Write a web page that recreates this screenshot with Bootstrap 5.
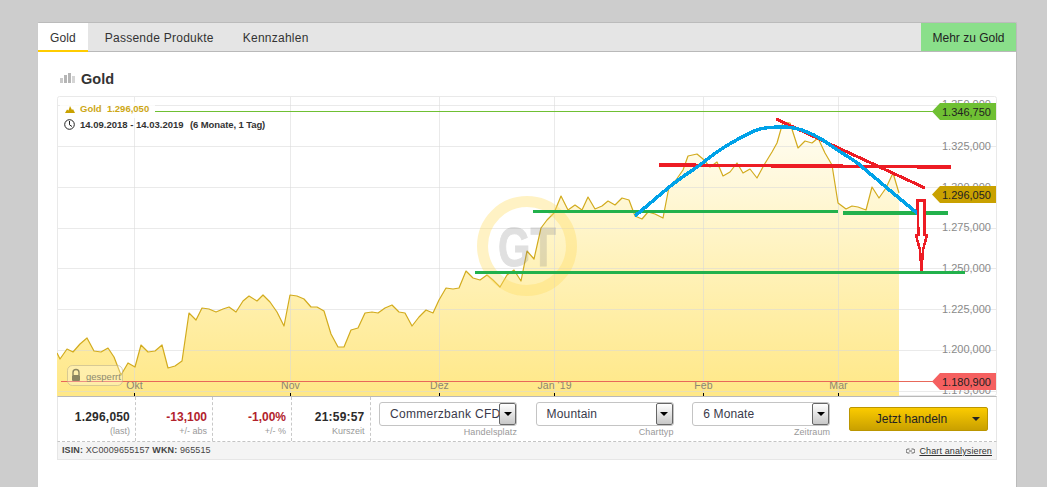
<!DOCTYPE html>
<html lang="de">
<head>
<meta charset="utf-8">
<title>Gold</title>
<link href="https://cdn.jsdelivr.net/npm/bootstrap@5.3.0/dist/css/bootstrap.min.css" rel="stylesheet">
<style>
html,body{height:100%;overflow:hidden}
body{background:#cdcdcd;font-family:"Liberation Sans",Arial,sans-serif;color:#333;font-size:12px}
.shell{margin:22px 30px 0 37px;height:465px;background:#fff;border:1px solid #bbb;border-bottom:0;border-left-color:#ccc;border-radius:2px 2px 0 0}
.tabbar{height:29px;background:#e5e5e5;border-bottom:1px solid #b9b9b9}
.tabbar .nav-link{color:#333;font-size:12px;letter-spacing:.25px;padding:0 14.5px;line-height:30px;height:28px;border-radius:0}
.tabbar .nav-link.active{background:#fff;color:#333;height:29px;border-bottom:2px solid #fc0;padding:0 12px;letter-spacing:.1px}
.tabbar .nav-item:nth-child(2){margin-left:2.5px}
.more{background:#8adf8a;color:#222;font-size:12px;line-height:30px;width:95px;text-align:center;text-decoration:none}
.headline{padding:19px 0 0 22px;height:44px;gap:6px}
.headline h1{font-size:14.5px;font-weight:700;margin:0;color:#333;line-height:17px}
.chartwrap{margin:0 19px}
.plot{display:block;width:940px;height:300px}
.plot text{font-family:"Liberation Sans",Arial,sans-serif}
.ax{font-size:11px;fill:#8a8a8a}
.mo{font-size:10.5px;fill:#8c8670;letter-spacing:.1px;text-anchor:middle}
.tagt{font-size:11px;fill:#222}
.panel{height:46px;border:1px solid #e6e6e6;border-width:0 1px;border-top:1px solid #b9b9b9;border-bottom:1px dashed #c4c4c4}
.stat{height:100%;border-right:1px dashed #c8c8c8;padding:13px 5px 0 0;text-align:right}
.stat b{display:block;font-size:12px;line-height:14px;letter-spacing:.2px;color:#2b2b2b}
.stat span{display:block;font-size:9px;line-height:12px;margin-top:1px;color:#999}
.stat b.neg{color:#b2222c;letter-spacing:0}
.w1{width:78px}.w2{width:77px}.w3{width:79px}.w4{width:78.5px}
.pick{width:138px}
.pickbox{height:24px;border:1px solid #c4c4c4;border-radius:3px;background:#fff;overflow:hidden}
.pickbox span{font-size:12px;letter-spacing:.15px;padding:0 3px 0 10px;white-space:nowrap;overflow:hidden;flex:1;line-height:22px;color:#3a3a4a}
.pickbox span.wide{letter-spacing:.3px}
.pickbtn{width:17px;height:100%;border:1px solid #666;border-radius:2px;background:linear-gradient(#fff,#c8c8c8)}
.pickbtn i{border:4px solid transparent;border-top:4px solid #000;border-bottom:0;display:block}
.picklab{font-size:9px;line-height:12px;color:#999;text-align:right;margin-top:0;letter-spacing:.1px}
.selects{gap:18.6px;padding-left:8.5px;padding-top:5px;height:100%}
.trade{width:139px;height:24px;margin:5px 0 0 0;background:linear-gradient(#fbcb00,#c9a000);border:1px solid #bb9600;border-radius:2px;color:#222;font-size:12px;padding:0 7px 0 26px;line-height:22px}
.trade i{border:4px solid transparent;border-top:4px solid #222;border-bottom:0;display:block}
.foot{height:18px;background:#f4f4f4;border:1px solid #e6e6e6;border-top:0;font-size:9px;padding:0 4px;line-height:16px;color:#444;letter-spacing:.12px}
.foot a{color:#333;text-decoration:underline}
</style>
</head>
<body>
<div class="shell">
  <div class="tabbar d-flex justify-content-between">
    <ul class="nav">
      <li class="nav-item"><a class="nav-link active" href="#">Gold</a></li>
      <li class="nav-item"><a class="nav-link" href="#">Passende Produkte</a></li>
      <li class="nav-item"><a class="nav-link" href="#">Kennzahlen</a></li>
    </ul>
    <a class="more" href="#">Mehr zu Gold</a>
  </div>
  <div class="headline d-flex align-items-start">
    <svg width="15" height="17" viewBox="0 0 15 17"><rect x="0" y="7" width="3" height="5" fill="#c9c9c9"/><rect x="4" y="4" width="3" height="8" fill="#b5b5b5"/><rect x="8" y="2" width="3" height="10" fill="#b5b5b5"/><rect x="12" y="5" width="3" height="7" fill="#d5d5d5"/></svg>
    <h1>Gold</h1>
  </div>
  <div class="chartwrap">
    <svg class="plot" viewBox="57 96 940 300" xmlns="http://www.w3.org/2000/svg">
      <defs>
        <linearGradient id="fillg" gradientUnits="userSpaceOnUse" x1="0" y1="125" x2="0" y2="392">
          <stop offset="0" stop-color="#fffdf2"/><stop offset="1" stop-color="#ffe888"/>
        </linearGradient>
      </defs>
      <rect x="57.500" y="96.500" width="939" height="299" rx="2" fill="#fff" stroke="#e9e9e9"/>
      <path id="area" fill="url(#fillg)" d="M57 396V353L60 359 67 349 73 352 80 344 87 338 94 351 101 352 108 348 114 357 121 375 128 363 135 367 141 345 148 352 155 351 162 345 168 368 175 366 182 361 189 313 196 320 202 308 209 309 216 312 223 309 229 307 236 312 243 301 249 296 257 301 263 295 270 302 277 312 284 326 290 295 297 296 304 299 311 307 317 307 324 311 331 334 338 347 344 347 351 330 358 328 365 313 372 312 378 313 385 308 392 305 399 312 405 313 412 326 419 317 426 310 433 313 439 300 446 288 453 289 459 288 466 271 473 278 480 280 487 275 493 280 500 287 507 275 514 270 521 281 527 251 534 259 541 228 547 220 554 213 561 196 568 210 575 205 582 210 588 197 595 209 602 206 608 201 615 205 622 198 629 200 635 216 642 219 648 212 655 214 663 218 669 187 676 180 683 170 688 156 697 154 703 159 710 167 717 162 723 176 730 172 737 163 743 173 750 169 757 178 764 165 772 152 777 143 783 122 790 123 798 148 805 141 812 143 818 138 825 153 832 165 838 203 846 209 852 206 858 207 866 210 872 187 879 198 886 188 893 173 899 193V396Z"/>
      <g stroke="#d8d8d8" stroke-opacity=".55" stroke-width="1">
        <path d="M58 105.500H996M58 146.500H996M58 187.500H996M58 228.500H996M58 268.500H996M58 309.500H996M58 350.500H996M58 391.500H996"/>
        <path d="M134.500 97V395M290.500 97V395M439.500 97V395M554.500 97V395M703.500 97V395M838.500 97V395"/>
      </g>
      <path fill="none" stroke="#d2ab1e" stroke-width="1.200" stroke-linejoin="round" d="M57 353L60 359 67 349 73 352 80 344 87 338 94 351 101 352 108 348 114 357 121 375 128 363 135 367 141 345 148 352 155 351 162 345 168 368 175 366 182 361 189 313 196 320 202 308 209 309 216 312 223 309 229 307 236 312 243 301 249 296 257 301 263 295 270 302 277 312 284 326 290 295 297 296 304 299 311 307 317 307 324 311 331 334 338 347 344 347 351 330 358 328 365 313 372 312 378 313 385 308 392 305 399 312 405 313 412 326 419 317 426 310 433 313 439 300 446 288 453 289 459 288 466 271 473 278 480 280 487 275 493 280 500 287 507 275 514 270 521 281 527 251 534 259 541 228 547 220 554 213 561 196 568 210 575 205 582 210 588 197 595 209 602 206 608 201 615 205 622 198 629 200 635 216 642 219 648 212 655 214 663 218 669 187 676 180 683 170 688 156 697 154 703 159 710 167 717 162 723 176 730 172 737 163 743 173 750 169 757 178 764 165 772 152 777 143 783 122 790 123 798 148 805 141 812 143 818 138 825 153 832 165 838 203 846 209 852 206 858 207 866 210 872 187 879 198 886 188 893 173 899 193"/>
      <circle cx="527" cy="246" r="44.500" fill="none" stroke="#ffdc64" stroke-opacity=".38" stroke-width="11"/>
      <text x="498" y="266" font-size="56" font-weight="700" fill="#808080" stroke="#808080" opacity=".24" textLength="58" lengthAdjust="spacingAndGlyphs">GT</text>

      <text class="ax" x="942" y="108">1.350,000</text>
      <text class="ax" x="942" y="149.500">1.325,000</text>
      <text class="ax" x="942" y="190.500">1.300,000</text>
      <text class="ax" x="942" y="231">1.275,000</text>
      <text class="ax" x="942" y="271.500">1.250,000</text>
      <text class="ax" x="942" y="313">1.225,000</text>
      <text class="ax" x="942" y="353">1.200,000</text>
      <text class="ax" x="942" y="394">1.175,000</text>

      <text class="mo" x="134.500" y="389">Okt</text>
      <text class="mo" x="290.500" y="389">Nov</text>
      <text class="mo" x="439.500" y="389">Dez</text>
      <text class="mo" x="554.500" y="389">Jan '19</text>
      <text class="mo" x="703.500" y="389">Feb</text>
      <text class="mo" x="838.500" y="389">Mär</text>
      <path stroke="#000" d="M134.500 393V396M290.500 393V396M439.500 393V396M554.500 393V396M703.500 393V396M838.500 393V396"/>

      <path d="M61 381.500H934" stroke="#e8685a" stroke-width="1"/>
      <path d="M155 111.500H934" stroke="#6fc033" stroke-width="1"/>
      <path d="M940 103H996V120H940L932 111.500Z" fill="#6fc033"/>
      <text class="tagt" x="942" y="115.500">1.346,750</text>
      <path d="M940 186H996V203H940L932 194.500Z" fill="#c9a100"/>
      <text class="tagt" x="942" y="198.500">1.296,050</text>
      <path d="M940 373H996V390H940L932 381.500Z" fill="#f56060"/>
      <text class="tagt" x="942" y="385.500">1.180,900</text>

      <g shape-rendering="crispEdges">
        <path d="M659 165L733 165.500 951 167" fill="none" stroke="#ed1c24" stroke-width="3.500"/>
        <path d="M776 119L925 188" stroke="#ed1c24" stroke-width="3"/>
        <path d="M533 211.500H838M843 213H948M475 272.500H965" stroke="#22b14c" stroke-width="3.500"/>
        <path d="M635 216L668 188C680 178 690 172 700 165C712 155 722 148 733 142C745 135 752 131 760 129C768 127 775 127 783 127C792 127 800 129 807 132C817 136 825 141 833 147C843 154 851 158 860 165C870 174 878 180 887 188L923 218" fill="none" stroke="#00a2e8" stroke-width="3.500"/>
        <path d="M917.500 200.500H924.500V235H927L923 250 921.500 271 920 250 916 235H918.500Z" fill="#fff" stroke="#ed1c24" stroke-width="2.500"/>
      </g>

      <rect x="60" y="102" width="95" height="16" fill="#fff" fill-opacity=".8"/>
      <path d="M65 113L67 109.500 68.500 110.500 70 106 72 110 73 109 75 113Z" fill="#c9a100"/>
      <text x="80" y="112" font-size="9.500" font-weight="700" fill="#cda715">Gold&#160;&#160;1.296,050</text>
      <circle cx="69.500" cy="124.500" r="4.800" fill="none" stroke="#222" stroke-width="1"/>
      <path d="M69.500 121V124.800L72 126.500" fill="none" stroke="#222"/>
      <text x="80" y="128" font-size="9.500" font-weight="700" fill="#333">14.09.2018 - 14.03.2019</text>
      <text x="190" y="128" font-size="9.500" font-weight="700" fill="#333" letter-spacing="-.1">(6 Monate, 1 Tag)</text>

      <rect x="67.500" y="365.500" width="55" height="20" rx="5" fill="#fff" fill-opacity=".25" stroke="#bdb38d" stroke-opacity=".6"/>
      <path d="M73 375V372.500A3 3 0 0 1 79 372.500V375" fill="none" stroke="#8c8560" stroke-width="1.400"/>
      <rect x="72" y="375" width="8" height="6" rx="1" fill="#8c8560"/>
      <text x="86" y="380" font-size="9.500" fill="#8e8a70">gesperrt</text>
    </svg>
    <div class="panel d-flex">
      <div class="stat w1"><b>1.296,050</b><span>(last)</span></div>
      <div class="stat w2"><b class="neg">-13,100</b><span>+/- abs</span></div>
      <div class="stat w3"><b class="neg">-1,00%</b><span>+/- %</span></div>
      <div class="stat w4"><b>21:59:57</b><span>Kurszeit</span></div>
      <div class="selects d-flex align-items-start">
        <div class="pick">
          <div class="pickbox d-flex align-items-stretch"><span class="wide">Commerzbank CFD</span><div class="pickbtn d-flex align-items-center justify-content-center"><i></i></div></div>
          <div class="picklab">Handelsplatz</div>
        </div>
        <div class="pick">
          <div class="pickbox d-flex align-items-stretch"><span>Mountain</span><div class="pickbtn d-flex align-items-center justify-content-center"><i></i></div></div>
          <div class="picklab">Charttyp</div>
        </div>
        <div class="pick">
          <div class="pickbox d-flex align-items-stretch"><span>6 Monate</span><div class="pickbtn d-flex align-items-center justify-content-center"><i></i></div></div>
          <div class="picklab">Zeitraum</div>
        </div>
        <button type="button" class="trade btn d-flex align-items-center justify-content-between">Jetzt handeln<i></i></button>
      </div>
    </div>
    <div class="foot d-flex justify-content-between">
      <div><b>ISIN:</b> XC0009655157 <b>WKN:</b> 965515</div>
      <div class="d-flex align-items-center gap-1">
        <svg width="9" height="6" viewBox="0 0 9 6"><path d="M3.500 1H2A2 2 0 0 0 2 5H3.500M5.500 1H7A2 2 0 0 1 7 5H5.500M3 3H6" fill="none" stroke="#666"/></svg>
        <a href="#">Chart analysieren</a>
      </div>
    </div>
  </div>
</div>
<script src="https://cdn.jsdelivr.net/npm/bootstrap@5.3.0/dist/js/bootstrap.bundle.min.js"></script>
</body>
</html>
